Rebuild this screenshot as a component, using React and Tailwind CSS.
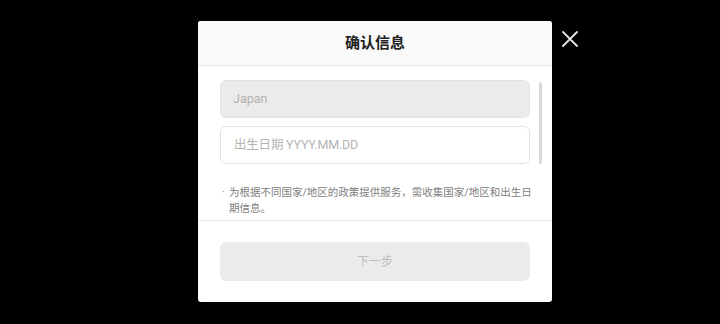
export default function App() {
  return (
    <div className="w-[720px] h-[324px] bg-black flex items-start justify-start pl-[198px] pt-[21px] relative" style={{ fontFamily: "Roboto, 'Noto Sans CJK SC', sans-serif" }}>
      <div className="w-[354px] h-[281px] shrink-0 bg-white rounded-[3px] overflow-hidden flex flex-col">
        <div className="h-[45px] shrink-0 bg-[#f9f9f9] border-b border-[#e8e8e8] flex items-center justify-center">
          <span className="text-[15px] font-bold text-[#222] leading-none">确认信息</span>
        </div>
        <div className="h-[155px] shrink-0 overflow-hidden relative border-b border-[#ececec]">
          <div className="px-[22px] pt-[14px] flex flex-col gap-[8px]">
            <div className="h-[38px] rounded-[6px] bg-[#ebebeb] border border-[#e3e3e3] flex items-center px-[12px]">
              <span className="text-[12.5px] text-[#b0b0b0]">Japan</span>
            </div>
            <div className="h-[38px] rounded-[6px] bg-white border border-[#e3e3e3] flex items-center px-[13px]">
              <span className="text-[12.5px] text-[#b4b4b4] tracking-[-0.2px]">出生日期 YYYY.MM.DD</span>
            </div>
            <div className="mt-[13px] flex text-[10.5px] leading-[16px] text-[#808080] pl-[2px] w-[320px]">
              <span className="w-[7px] shrink-0">·</span>
              <span className="w-[306px] shrink-0">为根据不同国家/地区的政策提供服务，需收集国家/地区和出生日期信息。</span>
            </div>
          </div>
          <div className="absolute left-[341px] top-[16px] w-[3px] h-[82px] rounded-full bg-[#d8d8d8]"></div>
        </div>
        <div className="flex-1 px-[22px] pt-[21px]">
          <div className="h-[39px] w-[310px] rounded-[6px] bg-[#ebebeb] flex items-center justify-center">
            <span className="text-[12px] text-[#bdbdbd]">下一步</span>
          </div>
        </div>
      </div>
      <svg className="absolute left-[562px] top-[31px]" width="16" height="16" viewBox="0 0 16 16">
        <path d="M1 1 L15 15 M15 1 L1 15" stroke="#e6e6e6" strokeWidth="1.8" strokeLinecap="round" />
      </svg>
    </div>
  );
}
